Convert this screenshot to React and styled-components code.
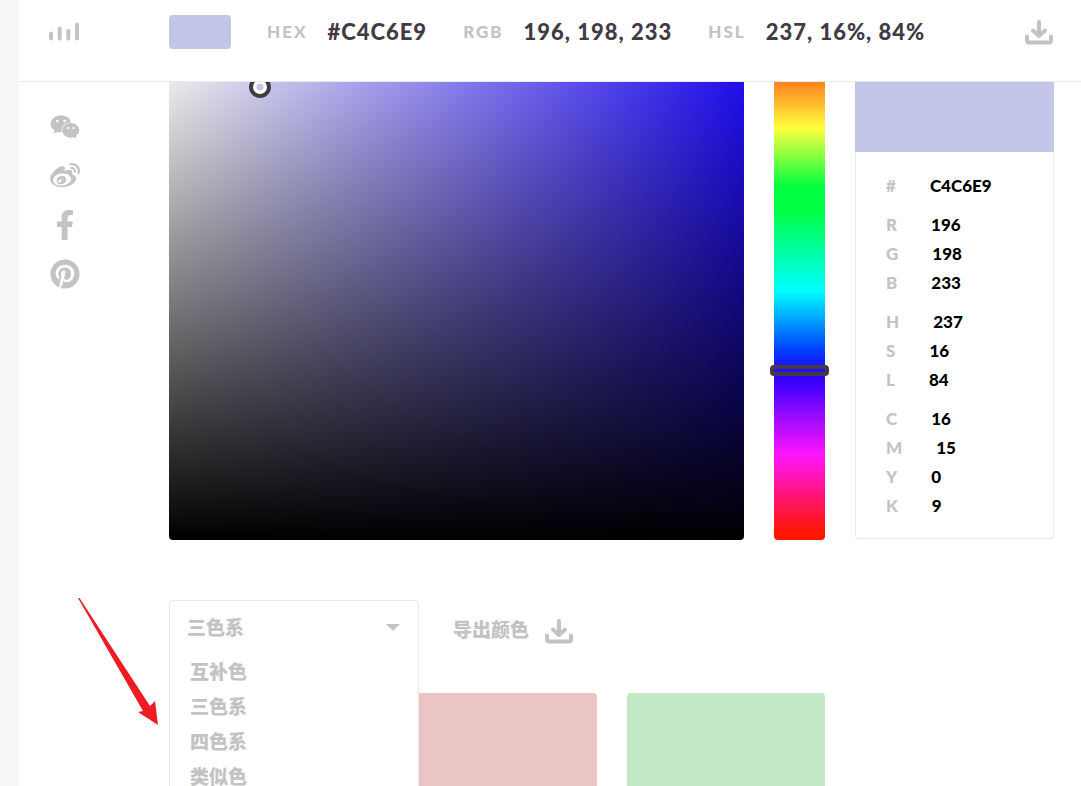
import React, { useState } from "react";
import styled, { createGlobalStyle } from "styled-components";
import { FaWeixin, FaWeibo, FaFacebookF, FaPinterest } from "react-icons/fa";

const GlobalStyle = createGlobalStyle`
  * { box-sizing: border-box; }
  body {
    margin: 0;
    background: #f7f7f7;
    font-family: Lato, "Noto Sans CJK SC", sans-serif;
    font-weight: 900;
    color: #c3c3c3;
  }
  button, input, select { font: inherit; color: inherit; }
`;

const Page = styled.div`
  position: relative;
  display: flex;
  flex-direction: column;
  height: 100vh;
  margin-left: 19px;
  overflow: hidden;
  background: #fff;
`;

const Header = styled.header`
  display: flex;
  align-items: center;
  flex: none;
  height: 82px;
  padding: 0 28px 18px 30px;
  border-bottom: 1px solid #e9e9e9;
`;

const LogoLink = styled.a`
  display: flex;
  width: 120px;
`;

const CurrentColor = styled.span`
  width: 62px;
  height: 34px;
  border-radius: 4px;
  background: #c4c6e9;
`;

const Readouts = styled.dl`
  display: flex;
  flex: 1;
  margin: 0 0 0 36px;
  gap: 36px;
`;

const Readout = styled.div`
  display: flex;
  align-items: center;
  gap: 20px;
  white-space: nowrap;
`;

const ReadoutLabel = styled.dt`
  font-size: 17px;
  line-height: 24px;
  letter-spacing: 2px;
`;

const ReadoutValue = styled.dd`
  margin: 0;
  font-size: 22px;
  line-height: 24px;
  letter-spacing: 1px;
  color: #423a44;
`;

const IconButton = styled.button`
  display: flex;
  align-items: center;
  gap: 16px;
  padding: 0;
  border: 0;
  background: none;
  cursor: pointer;
`;

const Body = styled.div`
  display: flex;
  flex: 1;
  min-height: 0;
`;

const Share = styled.nav`
  display: flex;
  flex-direction: column;
  align-items: center;
  flex: none;
  gap: 19px;
  width: 92px;
  margin-right: 58px;
  padding-top: 30px;
`;

const ShareLink = styled.a`
  display: flex;
  color: inherit;
`;

const Content = styled.main`
  flex: 1;
  min-width: 0;
  padding-right: 27px;
`;

const Picker = styled.section`
  display: grid;
  grid-template-columns: 1fr 51px 199px;
  gap: 30px;
  height: 458px;
`;

const Shade = styled.div`
  position: relative;
  overflow: hidden;
  border-radius: 0 0 4px 4px;
  background:
    linear-gradient(to top, #000, transparent 497px),
    linear-gradient(to right, #fff, #230fff);
`;

const Knob = styled.span`
  position: absolute;
  top: -6px;
  left: 80px;
  width: 22px;
  height: 22px;
  border: 4px solid #423a44;
  border-radius: 50%;
  background: radial-gradient(circle, #cac4ea 3px, #fff 4px);
`;

const Hue = styled.div`
  position: relative;
  border-radius: 0 0 4px 4px;
  background: linear-gradient(
    to top,
    #ff1500 0,
    #ff1500 8px,
    #ff14ff 86px,
    #3000ff 162px,
    #1818ff 176px,
    #0040ff 190px,
    #00ffff 249px,
    #00ff40 331px,
    #00ff40 353px,
    #ffff40 412px,
    #ff1500 497px
  );
`;

const HueHandle = styled.span`
  position: absolute;
  top: 283px;
  left: -4px;
  right: -4px;
  height: 11px;
  border: 4px solid #423a44;
  border-radius: 4px;
`;

const Card = styled.aside`
  display: flex;
  flex-direction: column;
  height: 457px;
  border: 1px solid #e9e9e9;
  border-top: 0;
  border-radius: 0 0 4px 4px;
`;

const CardColor = styled.div`
  flex: none;
  height: 70px;
  margin: 0 -1px;
  background: #c4c6e9;
`;

const Fields = styled.form`
  display: flex;
  flex-direction: column;
  gap: 10px;
  padding: 19px 30px;
`;

const FieldGroup = styled.div`
  display: flex;
  flex-direction: column;
`;

const Field = styled.label`
  display: flex;
  align-items: center;
  gap: 34px;
  height: 29px;
  font-size: 17px;
`;

const FieldInput = styled.input`
  flex: 1;
  min-width: 0;
  padding: 0;
  border: 0;
  outline: 0;
  background: none;
  color: #000;
`;

const Toolbar = styled.div`
  display: flex;
  align-items: flex-start;
  gap: 34px;
  height: 93px;
  margin-top: 60px;
`;

const Dropdown = styled.div`
  position: relative;
  width: 250px;
  height: 60px;
  font-size: 19px;
`;

const DropdownPanel = styled.div`
  position: absolute;
  inset: 0 0 auto;
  z-index: 1;
  border: 1px solid #e9e9e9;
  border-radius: 4px;
  background: #fff;
`;

const DropdownHead = styled.div`
  display: flex;
  align-items: center;
  height: 52px;
  padding: 0 18px 0 17px;
`;

const SchemeSelect = styled.select`
  flex: 1;
  padding: 0;
  border: 0;
  outline: 0;
  appearance: none;
  background: none;
`;

const Options = styled.ul`
  margin: 0;
  padding: 1px 0 20px;
  list-style: none;
`;

const Option = styled.button`
  display: block;
  width: 100%;
  height: 35px;
  padding: 0 20px;
  border: 0;
  background: none;
  line-height: 35px;
  text-align: left;
  cursor: pointer;
`;

const ExportButton = styled(IconButton)`
  height: 60px;
  font-size: 19px;
  line-height: 24px;
`;

const Palette = styled.div`
  display: grid;
  grid-template-columns: repeat(4, 1fr);
  gap: 30px;
`;

const Swatch = styled.div`
  height: 200px;
  border-radius: 4px;
  background: ${(p) => p.$color};
`;

const Pointer = styled.svg`
  position: absolute;
  top: 597px;
  left: 58px;
  z-index: 2;
  pointer-events: none;
`;

const Logo = () => (
  <svg width="32" height="20" viewBox="0 0 32 20" stroke="#c3c3c3" strokeWidth="4" strokeLinecap="round">
    <path d="M2 11.500v5M10.700 6.500v10M19.300 9v7.500M28 2.500v14" />
  </svg>
);

const DownloadIcon = () => (
  <svg width="28" height="27" viewBox="0 0 28 27" fill="none" stroke="#c3c3c3" strokeWidth="4" strokeLinecap="round" strokeLinejoin="round">
    <path d="M14 4v13M8 12.500l6 5.500 6-5.500" />
    <path d="M2 18.500v4q0 2 2 2h20q2 0 2-2v-4" />
  </svg>
);

const readouts = [
  ["HEX", "#C4C6E9"],
  ["RGB", "196, 198, 233"],
  ["HSL", "237, 16%, 84%"],
];

const fieldGroups = [
  [["#", "C4C6E9"]],
  [["R", "196"], ["G", "198"], ["B", "233"]],
  [["H", "237"], ["S", "16"], ["L", "84"]],
  [["C", "16"], ["M", "15"], ["Y", "0"], ["K", "9"]],
];

const shareLinks = [
  ["微信", FaWeixin],
  ["微博", FaWeibo],
  ["Facebook", FaFacebookF],
  ["Pinterest", FaPinterest],
];

const schemes = ["互补色", "三色系", "四色系", "类似色"];

const palette = ["#c4c6e9", "#ebc4c6", "#c3e9c7"];

export default function App() {
  const [scheme, setScheme] = useState("三色系");
  return (
    <>
      <GlobalStyle />
      <Page>
        <Header>
          <LogoLink href="#" aria-label="首页"><Logo /></LogoLink>
          <CurrentColor />
          <Readouts>
            {readouts.map(([label, value]) => (
              <Readout key={label}>
                <ReadoutLabel>{label}</ReadoutLabel>
                <ReadoutValue>{value}</ReadoutValue>
              </Readout>
            ))}
          </Readouts>
          <IconButton type="button" aria-label="下载"><DownloadIcon /></IconButton>
        </Header>
        <Body>
          <Share>
            {shareLinks.map(([name, Icon]) => (
              <ShareLink key={name} href="#" aria-label={name}><Icon size={30} /></ShareLink>
            ))}
          </Share>
          <Content>
            <Picker>
              <Shade><Knob /></Shade>
              <Hue><HueHandle /></Hue>
              <Card>
                <CardColor />
                <Fields>
                  {fieldGroups.map((group) => (
                    <FieldGroup key={group[0][0]}>
                      {group.map(([label, value]) => (
                        <Field key={label}>
                          {label}
                          <FieldInput defaultValue={value} />
                        </Field>
                      ))}
                    </FieldGroup>
                  ))}
                </Fields>
              </Card>
            </Picker>
            <Toolbar>
              <Dropdown>
                <DropdownPanel>
                  <DropdownHead>
                    <SchemeSelect aria-label="配色" value={scheme} onChange={(e) => setScheme(e.target.value)}>
                      {schemes.map((s) => <option key={s}>{s}</option>)}
                    </SchemeSelect>
                    <svg width="14" height="7" viewBox="0 0 14 7" fill="#c3c3c3"><path d="M0 0h14L7 7z" /></svg>
                  </DropdownHead>
                  <Options>
                    {schemes.map((s) => (
                      <li key={s}><Option type="button" onClick={() => setScheme(s)}>{s}</Option></li>
                    ))}
                  </Options>
                </DropdownPanel>
              </Dropdown>
              <ExportButton type="button">导出颜色<DownloadIcon /></ExportButton>
            </Toolbar>
            <Palette>
              {palette.map((color) => <Swatch key={color} $color={color} />)}
            </Palette>
          </Content>
        </Body>
        <Pointer width="84" height="130" viewBox="0 0 84 130" fill="#ed1c24">
          <path d="M1 1l1.500 0L73 109l5-5 3 24-20-13 5-1z" />
        </Pointer>
      </Page>
    </>
  );
}
